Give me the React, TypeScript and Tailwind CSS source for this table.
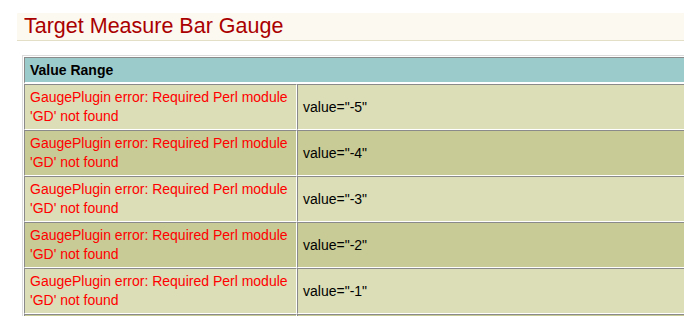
import React from "react";

const rows = ["-5", "-4", "-3", "-2", "-1"];

export default function App() {
  const cellBorder =
    "border-t border-l border-b border-r border-t-[#8a8a8a] border-l-[#8a8a8a] border-b-white border-r-white";

  return (
    <div className="w-[684px] h-[316px] overflow-hidden bg-white font-['Liberation_Sans',Arial,sans-serif]">
      {/* title */}
      <div className="ml-[17px] mt-[13px] w-[700px] h-[28px] bg-[#fcf9f0] border-b border-[#e3dec6] pl-[7px]">
        <h1 className="text-[21.5px] leading-[27px] text-[#aa0000]">Target Measure Bar Gauge</h1>
      </div>

      {/* table */}
      <div className="ml-[22px] mt-[14px] w-[800px] border-t border-l border-[#dcdcdc] pt-px pl-px">
        <table className="w-full border-separate border-spacing-0 text-[14px] leading-[19px]">
          <thead>
            <tr>
              <th
                colSpan={2}
                className="bg-[#9ccbcc] text-left font-bold text-black px-[5px] h-[27px] border-t border-l border-b-2 border-t-[#8a8a8a] border-l-[#8a8a8a] border-b-white"
              >
                Value Range
              </th>
            </tr>
          </thead>
          <tbody>
            {rows.map((v, i) => (
              <tr key={v} className={i % 2 === 0 ? "bg-[#dbdeb6]" : "bg-[#c8cb95]"}>
                <td className={`${cellBorder} w-[273px] px-[5px] pt-[3px] pb-[3px] h-[46px] text-[#ff0000] align-top`}>
                  GaugePlugin error: Required Perl module 'GD' not found
                </td>
                <td className={`${cellBorder} px-[5px] text-black align-middle`}>value="{v}"</td>
              </tr>
            ))}
            <tr className="bg-[#c8cb95]">
              <td className={`${cellBorder} h-[46px]`}></td>
              <td className={cellBorder}></td>
            </tr>
          </tbody>
        </table>
      </div>
    </div>
  );
}
